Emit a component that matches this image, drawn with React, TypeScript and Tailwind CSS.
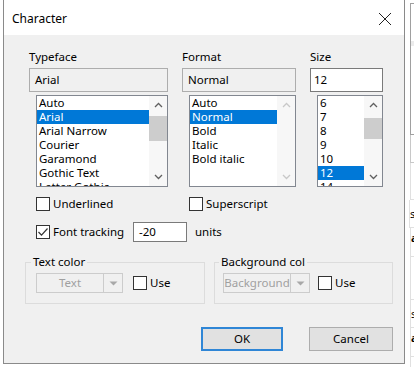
import React from "react";

const ChevUp = ({ c = "#606060" }: { c?: string }) => (
  <svg width="9" height="6" viewBox="0 0 9 6"><path d="M1 5 L4.5 1.5 L8 5" fill="none" stroke={c} strokeWidth="1.3" /></svg>
);
const ChevDown = ({ c = "#606060" }: { c?: string }) => (
  <svg width="9" height="6" viewBox="0 0 9 6"><path d="M1 1 L4.5 4.5 L8 1" fill="none" stroke={c} strokeWidth="1.3" /></svg>
);

function ListBox({
  items,
  selected,
  width,
  thumb,
  disabled,
}: {
  items: string[];
  selected: number;
  width: string;
  thumb?: { top: string; h: string } | null;
  disabled?: boolean;
}) {
  return (
    <div className={`ml-[7px] ${width} h-[92px] border border-[#828790] bg-white flex overflow-hidden`}>
      <div className="flex-1 flex flex-col overflow-hidden">
        {items.map((it, i) => (
          <div
            key={i}
            className={`h-[14px] shrink-0 leading-[14px] pl-[2px] whitespace-nowrap ${i === selected ? "bg-[#0078d7] text-white" : "text-black"}`}
          >
            {it}
          </div>
        ))}
      </div>
      <div className="w-[18px] shrink-0 bg-[#f7f7f7] flex flex-col items-center">
        <div className="h-[18px] flex items-center justify-center">
          <ChevUp c={disabled ? "#c8c8c8" : "#606060"} />
        </div>
        <div className="flex-1 w-full flex flex-col">
          {thumb ? <div className={`${thumb.top} ${thumb.h} w-full bg-[#cdcdcd]`} /> : null}
        </div>
        <div className="h-[18px] flex items-center justify-center">
          <ChevDown c={disabled ? "#c8c8c8" : "#606060"} />
        </div>
      </div>
    </div>
  );
}

function CheckBox({ checked }: { checked?: boolean }) {
  return (
    <div className="w-[14px] h-[14px] border border-[#333] bg-white flex items-center justify-center shrink-0">
      {checked ? (
        <svg width="12" height="12" viewBox="0 0 12 12"><path d="M1.5 6 L4.5 9.2 L10.5 2.5" fill="none" stroke="#333" strokeWidth="1.2" /></svg>
      ) : null}
    </div>
  );
}

function Combo({ text }: { text: string }) {
  return (
    <div className="w-[87px] h-[20px] border border-[#cccccc] bg-[#f0f0f0] flex">
      <div className="flex-1 flex items-center justify-center text-[#a0a0a0] overflow-hidden whitespace-nowrap">{text}</div>
      <div className="w-[19px] border-l border-[#cccccc] flex items-center justify-center">
        <svg width="9" height="5" viewBox="0 0 9 5"><path d="M0.5 0.5 L8.5 0.5 L4.5 4.5 Z" fill="#a8a8a8" /></svg>
      </div>
    </div>
  );
}

export default function App() {
  return (
    <div className="w-[414px] h-[367px] bg-white flex overflow-hidden font-['Noto_Sans',sans-serif] text-[11.5px] text-black">
      <div className="ml-[3px] w-[402px] h-[364px] border-x border-b border-[#8a8a8a] flex flex-col shrink-0">
        <div className="h-[35px] bg-white flex items-center justify-between pl-[8px] pr-[12px] pt-[3px] shrink-0">
          <span className="text-[12px] leading-none">Character</span>
          <svg width="14" height="14" viewBox="0 0 14 14"><path d="M1 1 L13 13 M13 1 L1 13" stroke="#222" strokeWidth="1" /></svg>
        </div>
        <div className="flex-1 bg-[#f0f0f0] flex flex-col">
          <div className="flex pl-[25px] pt-[15px] gap-[14px]">
            <div className="w-[139px] flex flex-col">
              <div className="h-[14px] leading-[14px]">Typeface</div>
              <div className="mt-[4px] h-[24px] border border-[#adadad] bg-[#f0f0f0] flex items-center pl-[5px]">Arial</div>
              <div className="mt-[3px]">
                <ListBox
                  items={["Auto", "Arial", "Arial Narrow", "Courier", "Garamond", "Gothic Text", "Letter Gothic"]}
                  selected={1}
                  width="w-[132px]"
                  thumb={{ top: "mt-[2px]", h: "h-[25px]" }}
                />
              </div>
            </div>
            <div className="w-[114px] flex flex-col">
              <div className="h-[14px] leading-[14px]">Format</div>
              <div className="mt-[4px] h-[24px] border border-[#adadad] bg-[#f0f0f0] flex items-center pl-[5px]">Normal</div>
              <div className="mt-[3px]">
                <ListBox items={["Auto", "Normal", "Bold", "Italic", "Bold italic"]} selected={1} width="w-[107px]" thumb={null} disabled />
              </div>
            </div>
            <div className="w-[73px] flex flex-col">
              <div className="h-[14px] leading-[14px]">Size</div>
              <div className="mt-[4px] h-[24px] border border-[#7a7a7a] bg-white flex items-center pl-[3px]">12</div>
              <div className="mt-[3px]">
                <ListBox
                  items={["6", "7", "8", "9", "10", "12", "14"]}
                  selected={5}
                  width="w-[66px]"
                  thumb={{ top: "mt-[4px]", h: "h-[21px]" }}
                />
              </div>
            </div>
          </div>

          <div className="flex pl-[32px] mt-[10px] h-[14px] items-center">
            <div className="w-[153px] flex items-center gap-[3px]">
              <CheckBox />
              <span>Underlined</span>
            </div>
            <div className="flex items-center gap-[3px]">
              <CheckBox />
              <span>Superscript</span>
            </div>
          </div>

          <div className="flex pl-[32px] mt-[11px] h-[20px] items-center">
            <div className="w-[97px] flex items-center gap-[3px]">
              <CheckBox checked />
              <span>Font tracking</span>
            </div>
            <div className="w-[54px] h-[20px] border border-[#7a7a7a] bg-white flex items-center pl-[5px]">-20</div>
            <span className="ml-[8px]">units</span>
          </div>

          <div className="flex pl-[21px] mt-[13px] gap-[9px]">
            <fieldset className="w-[180px] border border-[#dcdcdc] pl-[10px] pb-[10px] flex">
              <legend className="-ml-[5px] px-[2px] leading-[14px]">Text color</legend>
              <div className="flex items-center gap-[10px] mt-[4px]">
                <Combo text="Text" />
                <CheckBox />
                <span className="-ml-[7px]">Use</span>
              </div>
            </fieldset>
            <fieldset className="w-[179px] border border-[#dcdcdc] pl-[8px] pb-[10px] flex">
              <legend className="-ml-[4px] px-[2px] leading-[14px]">Background col</legend>
              <div className="flex items-center gap-[8px] mt-[4px]">
                <Combo text="Background" />
                <CheckBox />
                <span className="-ml-[5px]">Use</span>
              </div>
            </fieldset>
          </div>

          <div className="flex justify-end pr-[11px] mt-[23px] gap-[26px]">
            <div className="w-[82px] h-[24px] border-2 border-[#2f86d6] bg-[#e1e1e1] flex items-center justify-center">OK</div>
            <div className="w-[84px] h-[24px] border border-[#adadad] bg-[#e1e1e1] flex items-center justify-center">Cancel</div>
          </div>
        </div>
      </div>
      <div className="flex-1 flex flex-col pl-[5px]">
        <div className="mt-[3px] h-[132px] border-l border-t border-b border-[#a0a0a0]">
          <div className="mt-[37px] h-[5px] bg-[#ececec]" />
        </div>
        <div className="h-[28px] border-l border-b border-[#c8c8c8]" />
        <div className="h-[37px] border-l border-b border-[#e0e0e0]" />
        <div className="h-[28px] border-l border-b border-[#e0e0e0] text-[11px] leading-[28px] -ml-[1px]">s</div>
        <div className="h-[29px] border-l border-b border-[#e0e0e0] text-[11px] leading-[20px] font-bold">a</div>
        <div className="h-[43px] border-l border-b border-[#e0e0e0]" />
        <div className="h-[28px] border-l border-b border-[#e0e0e0] text-[11px] leading-[28px]">s</div>
        <div className="h-[29px] border-l border-b border-[#e0e0e0] text-[11px] leading-[20px] font-bold">a</div>
        <div className="flex-1 border-l border-[#e0e0e0]" />
      </div>
    </div>
  );
}
